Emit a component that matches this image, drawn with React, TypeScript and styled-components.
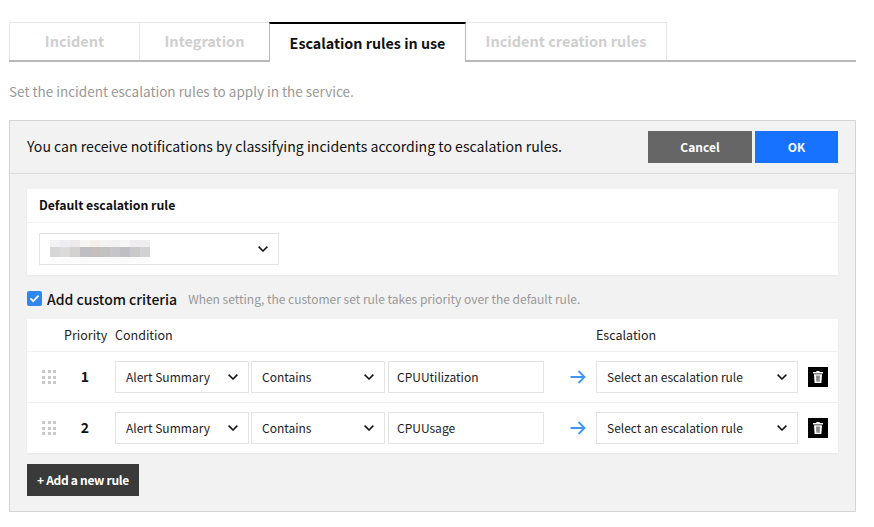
import styled, { createGlobalStyle } from 'styled-components';

const GlobalStyle = createGlobalStyle`
    html, body {
        margin: 0;
        background: #fff;
    }
    * {
        box-sizing: border-box;
    }
    body {
        font-family: "Noto Sans CJK KR", "Noto Sans", sans-serif;
        color: #111;
    }
`;

const mosaicRows = [
    ['#f3f3f4', '#eceef1', '#eceaea', '#f6f6f5', '#f2efed', '#f3f3f2', '#f2f2f2', '#f7f7f7', '#efedef', '#eeeeee'],
    ['#d6d6d6', '#dcdbd9', '#d5d1d0', '#bebfc1', '#c4bfbc', '#c2c2c2', '#c6c6c8', '#bfbec4', '#c9c9c9', '#d2d2d2'],
    ['#fcfcfc', '#fbfbfb', '#fbfbfb', '#fafafa', '#fafafa', '#fafafa', '#fafafa', '#fafafa', '#fbfbfb', '#fbfbfb'],
];

const rules = [
    { priority: 1, keyword: 'CPUUtilization' },
    { priority: 2, keyword: 'CPUUsage' },
];

const Chevron = () => (
    <svg width="10" height="6" viewBox="0 0 10 6" fill="none">
        <path d="M0.6 0.6 5 5 9.4 0.6" stroke="#111" strokeWidth="1.5" />
    </svg>
);

const ArrowIcon = () => (
    <svg width="16" height="14" viewBox="0 0 16 14" fill="none">
        <path d="M0.5 7H14.5M8.5 1l6 6-6 6" stroke="#3d96f8" strokeWidth="1.8" />
    </svg>
);

const TrashIcon = () => (
    <svg width="10" height="12" viewBox="0 0 10 12">
        <path d="M3.4 0h3.2v1H10v1.4H0V1h3.4z" fill="#fff" />
        <path d="M1 3.2h8L8.4 12H1.6z" fill="#fff" />
        <path d="M3 4.4h4l-.3 6.3H3.3z" fill="#8a8a8a" />
    </svg>
);

const CheckIcon = () => (
    <svg width="11" height="9" viewBox="0 0 11 9" fill="none">
        <path d="M1.4 4.4 4.2 7.2 9.6 1.6" stroke="#fff" strokeWidth="1.8" />
    </svg>
);

const DragHandle = () => (
    <HandleGrid>
        {Array.from({ length: 9 }, (_, i) => (
            <HandleDot key={i} />
        ))}
    </HandleGrid>
);

const Select = ({ label, $width }: { label: string; $width: number }) => (
    <SelectBox $width={$width}>
        <span>{label}</span>
        <Chevron />
    </SelectBox>
);

export default function App() {
    return (
        <Page>
            <GlobalStyle />
            <Tabs>
                <Tab $width={131}>Incident</Tab>
                <Tab $width={131}>Integration</Tab>
                <ActiveTab>Escalation rules in use</ActiveTab>
                <Tab $width={202}>Incident creation rules</Tab>
            </Tabs>
            <Description>Set the incident escalation rules to apply in the service.</Description>
            <Panel>
                <PanelHeader>
                    <HeaderText>You can receive notifications by classifying incidents according to escalation rules.</HeaderText>
                    <HeaderButtons>
                        <CancelButton>Cancel</CancelButton>
                        <OkButton>OK</OkButton>
                    </HeaderButtons>
                </PanelHeader>
                <PanelBody>
                    <Card>
                        <CardTitle>Default escalation rule</CardTitle>
                        <CardContent>
                            <DefaultSelect>
                                <Mosaic>
                                    {mosaicRows.map((row) =>
                                        row.map((color, i) => <MosaicCell key={color + i} $color={color} />)
                                    )}
                                </Mosaic>
                                <Chevron />
                            </DefaultSelect>
                        </CardContent>
                    </Card>
                    <CriteriaRow>
                        <Checkbox>
                            <CheckIcon />
                        </Checkbox>
                        <CriteriaLabel>Add custom criteria</CriteriaLabel>
                        <CriteriaHint>When setting, the customer set rule takes priority over the default rule.</CriteriaHint>
                    </CriteriaRow>
                    <RuleTable>
                        <TableHead>
                            <PriorityHead>Priority</PriorityHead>
                            <ConditionHead>Condition</ConditionHead>
                            <span>Escalation</span>
                        </TableHead>
                        {rules.map((rule) => (
                            <RuleRow key={rule.priority}>
                                <DragCell>
                                    <DragHandle />
                                </DragCell>
                                <PriorityCell>{rule.priority}</PriorityCell>
                                <Select label="Alert Summary" $width={134} />
                                <Select label="Contains" $width={134} />
                                <KeywordInput>{rule.keyword}</KeywordInput>
                                <ArrowCell>
                                    <ArrowIcon />
                                </ArrowCell>
                                <Select label="Select an escalation rule" $width={202} />
                                <DeleteButton>
                                    <TrashIcon />
                                </DeleteButton>
                            </RuleRow>
                        ))}
                    </RuleTable>
                    <AddButton>+ Add a new rule</AddButton>
                </PanelBody>
            </Panel>
        </Page>
    );
}

const Page = styled.div`
    width: 874px;
    height: 527px;
    padding: 22px 18px 0 9px;
    overflow: hidden;
`;

const Tabs = styled.div`
    display: flex;
    height: 40px;
    border-bottom: 2px solid #b9b9b9;
`;

const Tab = styled.div<{ $width: number }>`
    width: ${({ $width }) => $width}px;
    height: 38px;
    padding-bottom: 2px;
    display: flex;
    align-items: center;
    justify-content: center;
    border: 1px solid #e6e6e6;
    border-bottom: 0;
    margin-right: -1px;
    font-size: 14.5px;
    font-weight: 700;
    color: #cfcfcf;
`;

const ActiveTab = styled.div`
    width: 197px;
    height: 40px;
    padding-bottom: 2px;
    display: flex;
    align-items: center;
    justify-content: center;
    border-top: 2px solid #000;
    border-left: 1px solid #b9b9b9;
    border-right: 1px solid #b9b9b9;
    background: #fff;
    position: relative;
    margin-right: -1px;
    font-size: 14.3px;
    font-weight: 700;
    color: #111;
`;

const Description = styled.p`
    margin: 19px 0 0;
    height: 20px;
    line-height: 20px;
    font-size: 13.5px;
    color: #999;
`;

const Panel = styled.section`
    margin-top: 19px;
    height: 392px;
    border: 1px solid #d5d5d5;
    background: #f2f2f2;
`;

const PanelHeader = styled.header`
    height: 53px;
    padding: 0 17px;
    display: flex;
    align-items: center;
    justify-content: space-between;
    border-bottom: 1px solid #dedede;
`;

const HeaderText = styled.span`
    font-size: 14.1px;
    color: #111;
    position: relative;
    top: -1px;
`;

const HeaderButtons = styled.div`
    display: flex;
    gap: 3px;
`;

const CancelButton = styled.button`
    width: 104px;
    height: 32px;
    border: 0;
    padding: 0 0 2px;
    background: #666;
    color: #fff;
    font: 700 12px "Noto Sans CJK KR", sans-serif;
`;

const OkButton = styled(CancelButton)`
    width: 83px;
    background: #1672ff;
`;

const PanelBody = styled.div`
    padding: 15px 17px 0;
`;

const Card = styled.div`
    height: 86px;
    background: #fff;
    box-shadow: 0 1px 2px rgba(0, 0, 0, 0.05);
`;

const CardTitle = styled.div`
    height: 34px;
    padding: 0 12px 2px;
    display: flex;
    align-items: center;
    border-bottom: 1px solid #f2f2f2;
    font-size: 12.3px;
    font-weight: 700;
`;

const CardContent = styled.div`
    padding: 10px 12px 0;
`;

const DefaultSelect = styled.div`
    width: 240px;
    height: 32px;
    padding: 0 10px 0 10px;
    display: flex;
    align-items: center;
    justify-content: space-between;
    border: 1px solid #e4e4e4;
`;

const Mosaic = styled.div`
    display: grid;
    grid-template-columns: repeat(10, 10px);
    grid-template-rows: 7px 10px 6px;
    margin-top: 5px;
`;

const MosaicCell = styled.i<{ $color: string }>`
    background: ${({ $color }) => $color};
`;

const CriteriaRow = styled.div`
    height: 44px;
    display: flex;
    align-items: center;
    padding-top: 3px;
`;

const Checkbox = styled.span`
    width: 15px;
    height: 15px;
    border-radius: 2px;
    background: #2f86ee;
    display: flex;
    align-items: center;
    justify-content: center;
`;

const CriteriaLabel = styled.span`
    margin-left: 5px;
    font-size: 14px;
    font-weight: 500;
    color: #111;
`;

const CriteriaHint = styled.span`
    margin-left: 11px;
    font-size: 12px;
    color: #999;
`;

const RuleTable = styled.div`
    background: #fff;
    box-shadow: 0 1px 2px rgba(0, 0, 0, 0.05);
`;

const TableHead = styled.div`
    height: 33px;
    padding-bottom: 2px;
    display: flex;
    align-items: center;
    font-size: 12.5px;
    color: #222;
    border-bottom: 1px solid #f0f0f0;
`;

const PriorityHead = styled.span`
    margin-left: 37px;
    width: 51px;
`;

const ConditionHead = styled.span`
    width: 481px;
`;

const RuleRow = styled.div`
    height: 51px;
    display: flex;
    align-items: center;
    border-bottom: 1px solid #f0f0f0;

    &:last-child {
        height: 50px;
        border-bottom: 0;
    }
`;

const DragCell = styled.div`
    width: 38px;
    padding-left: 15px;
`;

const HandleGrid = styled.div`
    width: 14px;
    display: grid;
    grid-template-columns: repeat(3, 3px);
    gap: 2.5px;
`;

const HandleDot = styled.i`
    width: 3px;
    height: 3px;
    background: #c9c9c9;
`;

const PriorityCell = styled.div`
    width: 50px;
    padding: 0 10px 2px 0;
    text-align: center;
    font-size: 14px;
    font-weight: 700;
`;

const SelectBox = styled.div<{ $width: number }>`
    width: ${({ $width }) => $width}px;
    height: 32px;
    margin-right: 2px;
    padding: 0 10px;
    display: flex;
    align-items: center;
    justify-content: space-between;
    border: 1px solid #e4e4e4;
    font-size: 12px;
    color: #222;

    span {
        position: relative;
        top: -1px;
    }
`;

const KeywordInput = styled.div`
    width: 156px;
    height: 32px;
    margin-left: 1px;
    padding: 0 8px 2px;
    display: flex;
    align-items: center;
    border: 1px solid #e4e4e4;
    font-size: 12px;
    color: #222;
`;

const ArrowCell = styled.div`
    width: 52px;
    display: flex;
    padding-left: 26px;
`;

const DeleteButton = styled.div`
    width: 20px;
    height: 20px;
    margin-left: 8px;
    background: #000;
    display: flex;
    align-items: center;
    justify-content: center;
`;

const AddButton = styled.button`
    display: block;
    width: 112px;
    height: 32px;
    margin-top: 11px;
    border: 0;
    padding: 0 0 2px;
    background: #3a3a3a;
    color: #fff;
    font: 700 12px "Noto Sans CJK KR", sans-serif;
    letter-spacing: -0.3px;
`;
